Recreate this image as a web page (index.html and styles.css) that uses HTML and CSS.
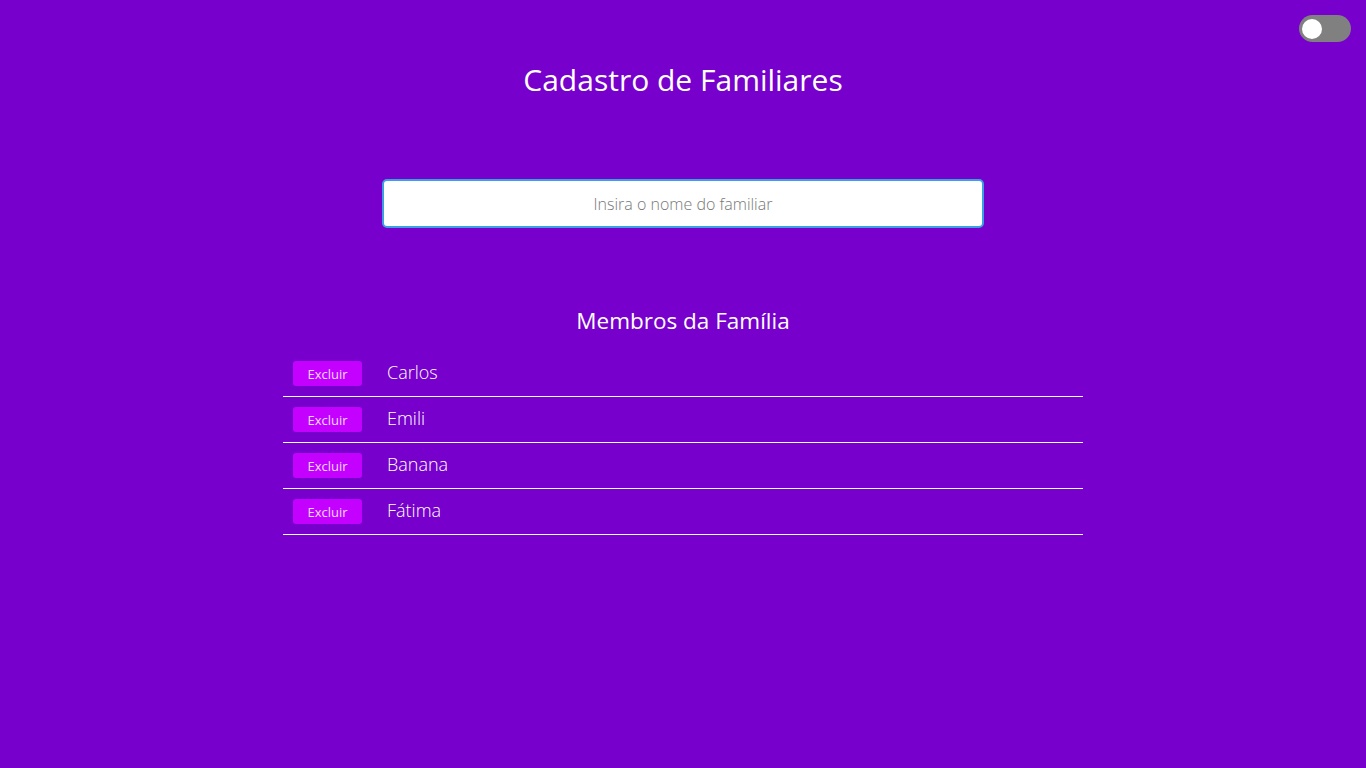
FILE: index.html
```html
<!DOCTYPE html>
<html lang="pt-BR">
<head>
<meta charset="utf-8">
<title>Cadastro de Familiares</title>
<link rel="stylesheet" href="styles.css">
</head>
<body>
<div class="toggle"><span class="knob"></span></div>
<main class="page">
  <h1 class="title">Cadastro de Familiares</h1>
  <input class="name-input" type="text" placeholder="Insira o nome do familiar">
  <h2 class="subtitle">Membros da Família</h2>
  <ul class="members">
    <li class="member"><button class="btn-del">Excluir</button><span class="member-name">Carlos</span></li>
    <li class="member"><button class="btn-del">Excluir</button><span class="member-name">Emili</span></li>
    <li class="member"><button class="btn-del">Excluir</button><span class="member-name">Banana</span></li>
    <li class="member"><button class="btn-del">Excluir</button><span class="member-name">Fátima</span></li>
  </ul>
</main>
</body>
</html>
```
FILE: styles.css
```css
* { box-sizing: border-box; }
html, body { margin: 0; height: 100%; }
body {
  background: #7700cc;
  color: #fff;
  font-family: "Open Sans", "Noto Sans", sans-serif;
  position: relative;
}
.toggle {
  position: absolute;
  top: 15px;
  right: 15px;
  width: 52px;
  height: 27px;
  border-radius: 14px;
  background: #808080;
}
.knob {
  position: absolute;
  top: 3.5px;
  left: 3px;
  width: 20px;
  height: 20px;
  border-radius: 50%;
  background: #fff;
}
.page {
  display: flex;
  flex-direction: column;
  align-items: center;
  padding-top: 58px;
}
.title {
  margin: 0;
  font-size: 30px;
  font-weight: 400;
  line-height: 44px;
}
.name-input {
  margin-top: 77px;
  width: 602px;
  height: 49px;
  border: 2px solid #3aa0df;
  border-radius: 5px;
  background: #fff;
  text-align: center;
  font-family: inherit;
  font-size: 16px;
  font-weight: 300;
  color: #333;
  outline: none;
}
.name-input::placeholder { color: #777; }
.subtitle {
  margin: 77px 0 0;
  font-size: 22.5px;
  font-weight: 400;
  line-height: 32px;
}
.members {
  list-style: none;
  margin: 14px 0 0;
  padding: 0;
  width: 800px;
}
.member {
  display: flex;
  align-items: center;
  height: 46px;
  padding: 0 10px;
  border-bottom: 1px solid #fff;
}
.btn-del {
  width: 69px;
  height: 25px;
  border: none;
  border-radius: 3px;
  background: #c400ff;
  color: #f4dcff;
  font-family: inherit;
  font-size: 13px;
  padding: 0;
}
.member-name {
  margin-left: 25px;
  padding-bottom: 4px;
  font-size: 18px;
  font-weight: 300;
}
```
